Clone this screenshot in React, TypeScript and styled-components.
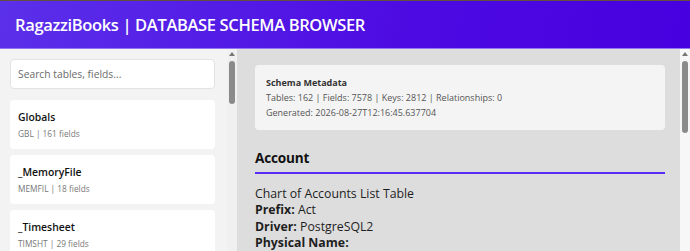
import styled, { createGlobalStyle } from 'styled-components'

const GlobalStyle = createGlobalStyle`
  html, body {
    margin: 0;
    padding: 0;
    overflow: hidden;
    background: #dddddd;
  }
  * { box-sizing: border-box; }
  body {
    font-family: 'Open Sans', 'Noto Sans', sans-serif;
    color: #1e1e1e;
  }
`

const tables = [
  { name: 'Globals', prefix: 'GBL', fields: 161 },
  { name: '_MemoryFile', prefix: 'MEMFIL', fields: 18 },
  { name: '_Timesheet', prefix: 'TIMSHT', fields: 29 },
]

const Shell = styled.div`
  height: 100vh;
  display: flex;
  flex-direction: column;
`

const Header = styled.header`
  flex: none;
  height: 49px;
  border-top: 1px solid #62503f;
  border-bottom: 1px solid #9474f2;
  background: linear-gradient(100deg, #5b30ea 0%, #4d0ae2 60%, #4700df 100%);
  display: flex;
  align-items: center;
  padding: 0 15px 1px;
`

const Title = styled.h1`
  margin: 0;
  color: #ffffff;
  font-size: 16.5px;
  font-weight: 600;
  letter-spacing: -0.35px;
`

const Body = styled.div`
  flex: 1;
  min-height: 0;
  display: flex;
`

const Sidebar = styled.aside`
  flex: none;
  width: 237px;
  display: flex;
  background: #f3f3f3;
`

const SideList = styled.div`
  flex: 1;
  min-width: 0;
  overflow: hidden;
  padding: 10px 12px 0 10px;
`

/* fake scrollbar rail drawn beside a panel */
const Rail = styled.div<{ $track: string }>`
  flex: none;
  width: 10px;
  background: ${(p) => p.$track};
  display: flex;
  flex-direction: column;
  align-items: center;
  padding-top: 3px;
`

const RailArrow = styled.span`
  width: 0;
  height: 0;
  border-left: 3px solid transparent;
  border-right: 3px solid transparent;
  border-bottom: 4px solid #767676;
`

const RailThumb = styled.span<{ $offset: number; $size: number }>`
  width: 6px;
  margin-top: ${(p) => p.$offset}px;
  height: ${(p) => p.$size}px;
  border-radius: 3px;
  background: #8a8a8a;
`

const Search = styled.input`
  display: block;
  width: 100%;
  height: 30px;
  margin: 0 0 11px;
  padding: 0 7px;
  border: 1px solid #e2e2e2;
  border-radius: 4px;
  background: #ffffff;
  font-family: inherit;
  font-size: 10.3px;
  color: #333;
  outline: none;

  &::placeholder {
    color: #6b6b6b;
  }
`

const TableList = styled.div`
  display: flex;
  flex-direction: column;
  gap: 6px;
`

const TableCard = styled.div`
  background: #ffffff;
  border-radius: 4px;
  padding: 9px 8px 9px;
  cursor: pointer;
`

const TableName = styled.div`
  font-size: 10.4px;
  line-height: 17px;
  font-weight: 600;
  color: #111;
`

const TableInfo = styled.div`
  margin-top: 2px;
  font-size: 8.3px;
  line-height: 12px;
  color: #777;
`

const MainWrap = styled.div`
  flex: 1;
  min-width: 0;
  display: flex;
  background: #dddddd;
`

const Main = styled.main`
  flex: 1;
  min-width: 0;
  overflow: hidden;
  padding: 16px 15px 0 18px;
`

const MetaBox = styled.section`
  background: #f4f4f4;
  border-radius: 4px;
  padding: 10px 11px;
  font-size: 9px;
  line-height: 15px;
  color: #555;
`

const MetaTitle = styled.div`
  font-weight: 700;
  color: #333;
`

const TableHeading = styled.h2`
  margin: 17px 0 0;
  padding-bottom: 3px;
  border-bottom: 2px solid #5a2bf5;
  font-size: 13.6px;
  line-height: 22px;
  font-weight: 700;
  letter-spacing: -0.2px;
  color: #111;
`

const Details = styled.div`
  margin-top: 12px;
  font-size: 12.3px;
  line-height: 16.3px;
  color: #1e1e1e;
`

const Label = styled.b`
  font-weight: 700;
`

export default function App() {
  return (
    <>
      <GlobalStyle />
      <Shell>
        <Header>
          <Title>RagazziBooks | DATABASE SCHEMA BROWSER</Title>
        </Header>
        <Body>
          <Sidebar>
            <SideList>
              <Search placeholder="Search tables, fields..." />
              <TableList>
                {tables.map((t) => (
                  <TableCard key={t.name}>
                    <TableName>{t.name}</TableName>
                    <TableInfo>
                      {t.prefix} | {t.fields} fields
                    </TableInfo>
                  </TableCard>
                ))}
              </TableList>
            </SideList>
            <Rail $track="#f0f0f0">
              <RailArrow />
              <RailThumb $offset={5} $size={43} />
            </Rail>
          </Sidebar>
          <MainWrap>
            <Main>
              <MetaBox>
                <MetaTitle>Schema Metadata</MetaTitle>
                <div>Tables: 162 | Fields: 7578 | Keys: 2812 | Relationships: 0</div>
                <div>Generated: 2026-08-27T12:16:45.637704</div>
              </MetaBox>
              <TableHeading>Account</TableHeading>
              <Details>
                <div>Chart of Accounts List Table</div>
                <div>
                  <Label>Prefix:</Label> Act
                </div>
                <div>
                  <Label>Driver:</Label> PostgreSQL2
                </div>
                <div>
                  <Label>Physical Name:</Label>
                </div>
              </Details>
            </Main>
            <Rail $track="#f7f7f7">
              <RailArrow />
              <RailThumb $offset={5} $size={72} />
            </Rail>
          </MainWrap>
        </Body>
      </Shell>
    </>
  )
}
